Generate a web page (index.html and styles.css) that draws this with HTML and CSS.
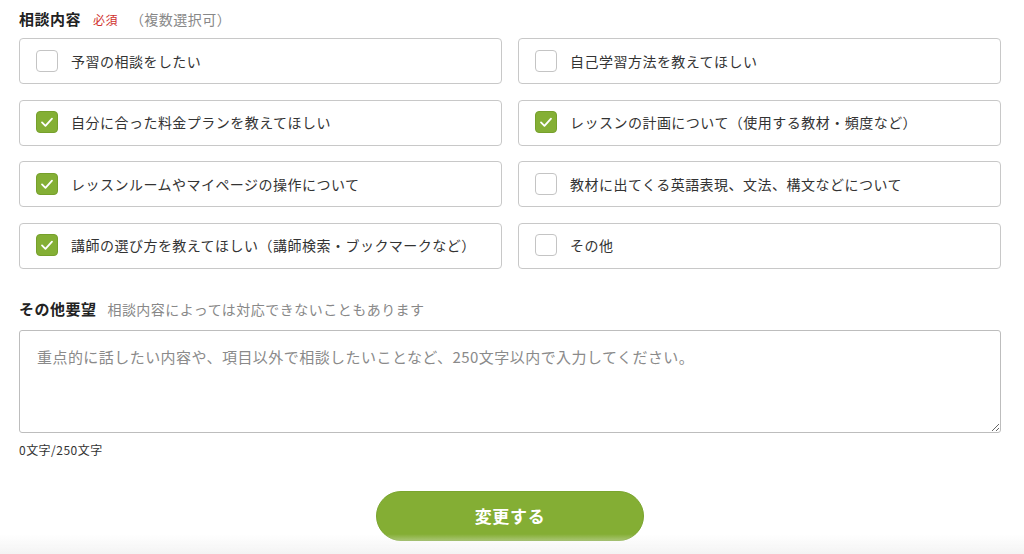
FILE: index.html
```html
<!DOCTYPE html>
<html lang="ja">
<head>
  <meta charset="UTF-8" />
  <meta name="viewport" content="width=device-width, initial-scale=1.0" />
  <title>相談内容</title>
  <link rel="stylesheet" href="styles.css">
</head>
<body>
  <div class="container">
    <div class="field-title">
      <span class="label">相談内容</span>
      <span class="required">必須</span>
      <span class="note">（複数選択可）</span>
    </div>

    <div class="choices">
      <label class="choice">
        <span class="box"></span>
        予習の相談をしたい
      </label>
      <label class="choice">
        <span class="box"></span>
        自己学習方法を教えてほしい
      </label>
      <label class="choice">
        <span class="box checked"><svg viewBox="0 0 22 22"><path d="M5.5 11.5l3.8 3.8 7.2-8" /></svg></span>
        自分に合った料金プランを教えてほしい
      </label>
      <label class="choice">
        <span class="box checked"><svg viewBox="0 0 22 22"><path d="M5.5 11.5l3.8 3.8 7.2-8" /></svg></span>
        レッスンの計画について（使用する教材・頻度など）
      </label>
      <label class="choice">
        <span class="box checked"><svg viewBox="0 0 22 22"><path d="M5.5 11.5l3.8 3.8 7.2-8" /></svg></span>
        レッスンルームやマイページの操作について
      </label>
      <label class="choice">
        <span class="box"></span>
        教材に出てくる英語表現、文法、構文などについて
      </label>
      <label class="choice">
        <span class="box checked"><svg viewBox="0 0 22 22"><path d="M5.5 11.5l3.8 3.8 7.2-8" /></svg></span>
        講師の選び方を教えてほしい（講師検索・ブックマークなど）
      </label>
      <label class="choice">
        <span class="box"></span>
        その他
      </label>
    </div>

    <div class="field-title other">
      <span class="label">その他要望</span>
      <span class="note">相談内容によっては対応できないこともあります</span>
    </div>
    <textarea class="request" placeholder="重点的に話したい内容や、項目以外で相談したいことなど、250文字以内で入力してください。"></textarea>
    <p class="count">0文字/250文字</p>

    <div class="actions">
      <button type="submit">変更する</button>
    </div>
  </div>
  <div class="bottom-fade"></div>
</body>
</html>
```

FILE: styles.css
```css
body {
  margin: 0;
  font-family: "Noto Sans CJK JP", "Noto Sans", sans-serif;
  background: #fff;
  color: #333;
  letter-spacing: 0.03em;
}

.container {
  width: 982px;
  margin-left: 19px;
  padding-top: 8px;
}

.field-title {
  display: flex;
  align-items: baseline;
  height: 22px;
  margin-bottom: 8px;
}

.field-title .label {
  font-size: 15px;
  font-weight: bold;
  color: #222;
}

.required {
  font-size: 12px;
  color: #d0312d;
  margin-left: 12px;
}

.field-title .note {
  font-size: 14px;
  color: #888;
  margin-left: 12px;
}

.field-title.other .note {
  margin-left: 11px;
}

.choices {
  display: grid;
  grid-template-columns: 1fr 1fr;
  column-gap: 16px;
  row-gap: 15.5px;
}

.choice {
  display: flex;
  align-items: center;
  height: 46px;
  box-sizing: border-box;
  border: 1px solid #c8c8c8;
  border-radius: 4px;
  padding-left: 16px;
  padding-bottom: 1px;
  font-size: 14px;
  color: #333;
  cursor: pointer;
}

.box {
  width: 22px;
  height: 22px;
  box-sizing: border-box;
  border: 1px solid #c4c4c4;
  border-radius: 4px;
  margin-right: 13px;
  background: #fff;
  flex-shrink: 0;
}

.box.checked {
  background: #84af35;
  border-color: #76a02c;
}

.box svg {
  display: block;
  width: 20px;
  height: 20px;
  fill: none;
  stroke: #fff;
  stroke-width: 2;
  stroke-linecap: round;
  stroke-linejoin: round;
}

.field-title.other {
  margin-top: 29px;
  margin-bottom: 10px;
}

.request {
  display: block;
  width: 100%;
  height: 103px;
  box-sizing: border-box;
  border: 1px solid #bdbdbd;
  border-radius: 3px;
  padding: 15px 17px;
  font-family: inherit;
  font-size: 15px;
  letter-spacing: 0.03em;
  color: #333;
  resize: vertical;
}

.request::placeholder {
  color: #8a8a8a;
}

.count {
  margin: 8px 0 0;
  font-size: 12px;
  color: #333;
}

.actions {
  display: flex;
  justify-content: center;
  margin-top: 33px;
}

button {
  width: 268px;
  height: 50px;
  border: 1px solid #7aa52e;
  border-radius: 25px;
  background: #84ae34;
  color: #fff;
  font-family: inherit;
  font-size: 17px;
  font-weight: bold;
  letter-spacing: 0.04em;
  cursor: pointer;
}

.bottom-fade {
  position: fixed;
  left: 0;
  right: 0;
  bottom: 0;
  height: 20px;
  background: linear-gradient(to bottom, rgba(245, 245, 245, 0), #f4f4f4);
  pointer-events: none;
}
```
